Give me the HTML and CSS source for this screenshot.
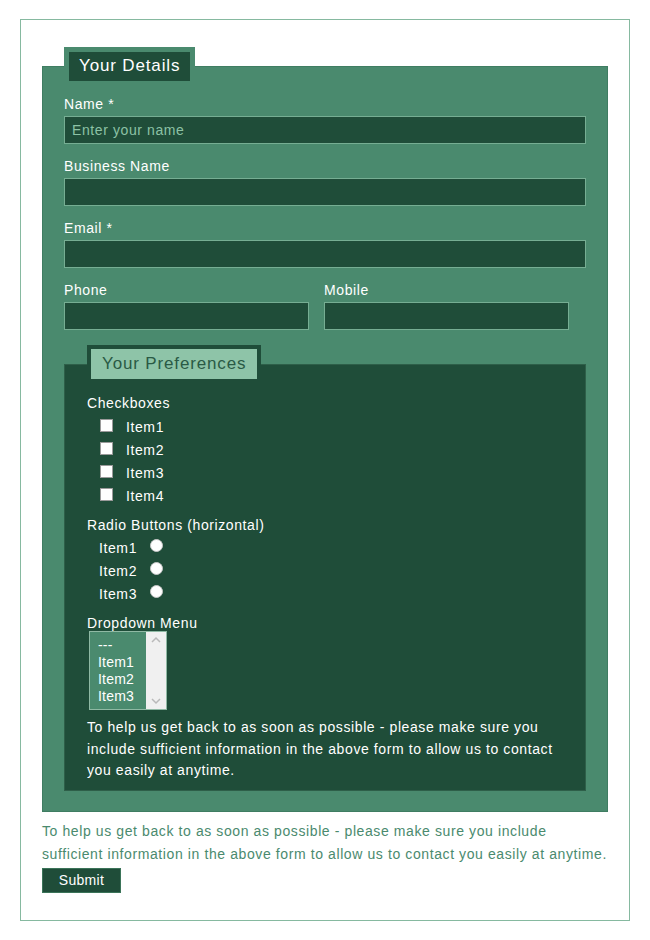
FILE: index.html
```html
<!DOCTYPE html>
<html lang="en">
<head>
<meta charset="utf-8">
<title>Contact Form</title>
<link rel="stylesheet" href="styles.css">
</head>
<body>
<form class="wrap">
  <fieldset class="details">
    <legend class="legend-main">Your Details</legend>
    <div class="group">
      <label class="lbl" for="name">Name *</label>
      <input class="txt" id="name" type="text" placeholder="Enter your name">
    </div>
    <div class="group">
      <label class="lbl" for="biz">Business Name</label>
      <input class="txt" id="biz" type="text">
    </div>
    <div class="group">
      <label class="lbl" for="email">Email *</label>
      <input class="txt" id="email" type="text">
    </div>
    <div class="row">
      <div class="group">
        <label class="lbl" for="phone">Phone</label>
        <input class="txt" id="phone" type="text">
      </div>
      <div class="group">
        <label class="lbl" for="mobile">Mobile</label>
        <input class="txt" id="mobile" type="text">
      </div>
    </div>
    <fieldset class="prefs">
      <legend class="legend-sub">Your Preferences</legend>
      <div class="lbl">Checkboxes</div>
      <ul class="checks">
        <li><input class="cb" type="checkbox" id="c1"><label for="c1">Item1</label></li>
        <li><input class="cb" type="checkbox" id="c2"><label for="c2">Item2</label></li>
        <li><input class="cb" type="checkbox" id="c3"><label for="c3">Item3</label></li>
        <li><input class="cb" type="checkbox" id="c4"><label for="c4">Item4</label></li>
      </ul>
      <div class="lbl">Radio Buttons (horizontal)</div>
      <ul class="radios">
        <li><label for="r1">Item1</label><input class="rb" type="radio" name="r" id="r1"></li>
        <li><label for="r2">Item2</label><input class="rb" type="radio" name="r" id="r2"></li>
        <li><label for="r3">Item3</label><input class="rb" type="radio" name="r" id="r3"></li>
      </ul>
      <div class="lbl">Dropdown Menu</div>
      <div class="listbox" role="listbox">
        <div class="opts">
          <div class="opt">---</div>
          <div class="opt">Item1</div>
          <div class="opt">Item2</div>
          <div class="opt">Item3</div>
        </div>
        <div class="sbar">
          <svg width="12" height="8" viewBox="0 0 12 8"><path d="M2 6 L6 2 L10 6" fill="none" stroke="#b9b9b9" stroke-width="1.5"/></svg>
          <svg width="12" height="8" viewBox="0 0 12 8"><path d="M2 2 L6 6 L10 2" fill="none" stroke="#b9b9b9" stroke-width="1.5"/></svg>
        </div>
      </div>
      <p class="note-in">To help us get back to as soon as possible - please make sure you include sufficient information in the above form to allow us to contact you easily at anytime.</p>
    </fieldset>
  </fieldset>
  <p class="note-out">To help us get back to as soon as possible - please make sure you include sufficient information in the above form to allow us to contact you easily at anytime.</p>
  <button class="submit" type="button">Submit</button>
</form>
</body>
</html>
```

FILE: styles.css
```css
* { box-sizing: border-box; }
body {
  margin: 0;
  font-family: "Liberation Sans", Arial, sans-serif;
  font-size: 14px;
  letter-spacing: 0.6px;
  background: #fff;
}
.wrap {
  margin: 19px 20px 0 20px;
  width: 610px;
  border: 1px solid #86b9a0;
  padding: 27px 21px 27px 21px;
}
.details {
  margin: 0;
  border: 1px solid #3f7d62;
  background: #4a8a6e;
  padding: 9px 21px 20px 21px;
  min-width: 0;
}
.legend-main {
  border: 5px solid #4a8a6e;
  background: #1f4d39;
  color: #fff;
  font-size: 17px;
  letter-spacing: 0.85px;
  line-height: 20px;
  padding: 4px 10px 5px 10px;
}
.group { margin-bottom: 13px; }
.lbl {
  display: block;
  color: #fff;
  line-height: 18px;
  margin-bottom: 3px;
}
.txt {
  display: block;
  width: 100%;
  height: 28px;
  margin: 0;
  border: 1px solid #76ae93;
  background: #1f4d39;
  color: #fff;
  font: inherit;
  letter-spacing: inherit;
  padding: 0 7px;
  outline: none;
}
.txt::placeholder { color: #8cc2a5; opacity: 1; }
.row {
  display: grid;
  grid-template-columns: 245px 245px;
  column-gap: 15px;
}
.row .group { margin-bottom: 15px; }
.prefs {
  margin: 0;
  border: 1px solid #2e5f49;
  background: #1f4d39;
  padding: 11px 22px 8px 22px;
  min-width: 0;
}
.legend-sub {
  border: 4px solid #1f4d39;
  background: #8ec4a8;
  color: #2a5a45;
  font-size: 17px;
  letter-spacing: 0.85px;
  line-height: 20px;
  padding: 5px 11px;
}
.checks, .radios {
  list-style: none;
  margin: 0 0 9px 0;
  padding: 0;
}
.radios { margin-top: -1px; }
.checks li {
  display: flex;
  align-items: center;
  height: 23px;
  padding-left: 13px;
  color: #fff;
}
.cb {
  appearance: none;
  width: 13px;
  height: 13px;
  margin: 0 13px 2px 0;
  background: #fff;
  border: 1px solid #9a9a9a;
  border-radius: 0;
}
.radios li {
  display: flex;
  align-items: center;
  height: 23px;
  padding-left: 12px;
  color: #fff;
}
.radios label { width: 51px; }
.rb {
  appearance: none;
  width: 13px;
  height: 13px;
  margin: 0 0 4px 0;
  background: #fff;
  border: 1px solid #c8c8c8;
  border-radius: 50%;
}
.listbox {
  display: flex;
  width: 78px;
  height: 79px;
  margin: -4px 0 0 2px;
  border: 1px solid #8fb9a4;
  background: #4a8a6e;
}
.opts {
  flex: 1;
  padding: 5px 0 0 8px;
  color: #fff;
  font-size: 14px;
  line-height: 17px;
  letter-spacing: 0.2px;
}
.sbar {
  width: 20px;
  background: #f0f0f0;
  display: flex;
  flex-direction: column;
  justify-content: space-between;
  align-items: center;
  padding: 4px 0 4px 0;
}
.sbar svg { display: block; }
.note-in {
  margin: 7px 0 0 0;
  color: #fff;
  line-height: 21.5px;
}
.note-out {
  margin: 8px 0 2px 0;
  color: #4a8a6e;
  line-height: 23px;
  letter-spacing: 0.6px;
}
.submit {
  display: block;
  width: 79px;
  height: 25px;
  padding: 0;
  border: 1px solid #3b7459;
  background: #1f4d39;
  color: #fff;
  font: inherit;
  letter-spacing: 0.3px;
  cursor: pointer;
}
```
